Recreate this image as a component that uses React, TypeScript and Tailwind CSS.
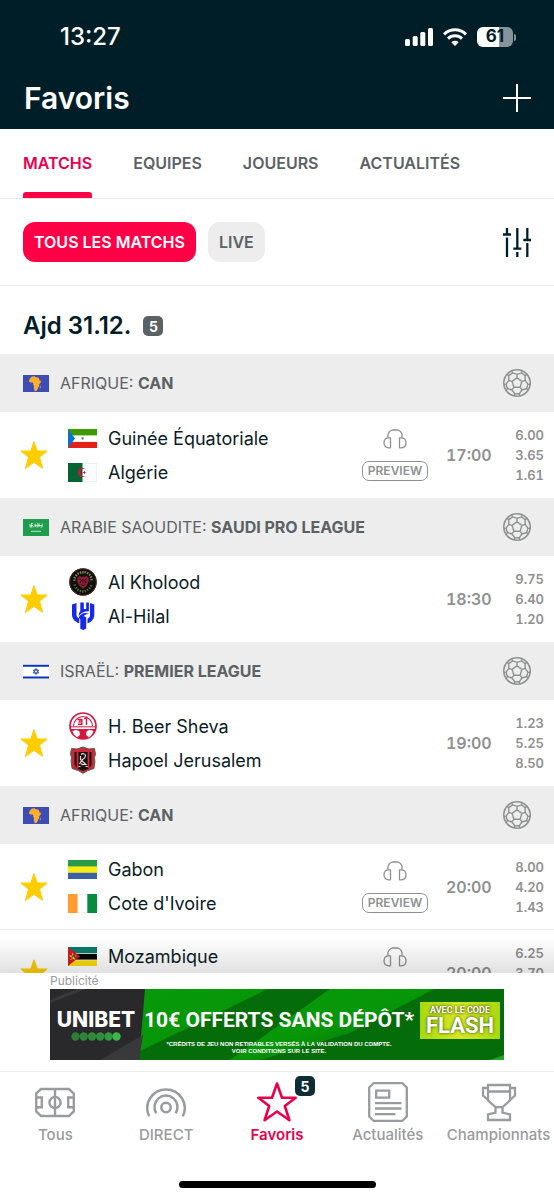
import React from "react";

type Team = { name: string; logo: React.ReactNode };
type Match = { home: Team; away: Team; time: string; odds: string[]; preview?: boolean };
type League = { country: string; name: string; flag: React.ReactNode; matches: Match[] };

/* ---------- Country flags ---------- */

const flagTeam = "w-[29px] h-[19px] shrink-0";
const flagLeague = "w-[26px] h-[17px] shrink-0";

const AfricaFlag = () => (
  <svg className={flagLeague} viewBox="0 0 26 17" aria-hidden="true">
    <rect width="26" height="17" fill="#3e4db5" />
    <path
      d="M7 3.400 8.600 1.700l3.200-.5.500.7 2.300.6 1 .2 1.200 3.100 1.500.1-.9 2-1.300 1.600.1 1.900-1.100.9-.2 1.400-1.900 2.600h-1.200l-.9-2.800.2-2.100-.9-1.900.1-1.500-.8-.5-1.900.1L6.100 6.700l.1-1.600Z"
      fill="#fbb02d"
    />
    <path d="m17 11.200.9-.7-.4 2.400-.8.500Z" fill="#fbb02d" />
  </svg>
);

const SaudiFlag = () => (
  <svg className={flagLeague} viewBox="0 0 26 17" aria-hidden="true">
    <rect width="26" height="17" fill="#1f9d4d" />
    <path
      d="M7 8V5m1.500 3V4.800M10 8c1 0 1.500-1 1.200-2.500M12.500 8V4.500M13.500 8h1.500V5M16.200 8V4.500M17.500 8h1.700V4.500M7 8h2.500M8 4.500h2M14 4.500h1.500M7 6.500h3M12 6.500h7"
      stroke="#fff"
      strokeWidth=".8"
      fill="none"
      opacity=".85"
    />
    <path d="M8 12.300h10" stroke="#fff" strokeWidth=".9" opacity=".8" />
  </svg>
);

const IsraelFlag = () => (
  <svg className={flagLeague} viewBox="0 0 26 17" aria-hidden="true">
    <rect y="1" width="26" height="15" fill="#fff" />
    <path d="M0 2.700h26M0 14.400h26" stroke="#0b33b5" strokeWidth="2" />
    <path d="m13 5.500 2.600 4.500h-5.200ZM13 11.500l2.600-4.500h-5.200Z" fill="none" stroke="#0b33b5" strokeWidth=".8" />
  </svg>
);

const GuineaFlag = () => (
  <svg className={flagTeam} viewBox="0 0 29 19" aria-hidden="true">
    <rect width="29" height="19" fill="#fff" />
    <path d="M0 0h29v6.400H0Z" fill="#3e9a00" />
    <path d="M0 12.900h29V19H0Z" fill="#e32118" />
    <path d="M0 0 7 9.500 0 19Z" fill="#0b73ce" />
    <path d="M13 8h3v2l-1.500 1.300L13 10Z" fill="#b9c0bb" />
    <path d="M14 8.500h1.200v1.800H14Z" fill="#5d8a62" />
  </svg>
);

const AlgeriaFlag = () => (
  <svg className={flagTeam} viewBox="0 0 29 19" aria-hidden="true">
    <rect x=".25" y=".25" width="28.500" height="18.500" fill="#fff" stroke="#e2e2e2" strokeWidth=".5" />
    <path d="M0 0h14.500v19H0Z" fill="#056334" />
    <path d="M17.600 6.200a4.600 4.600 0 1 0 0 6.600 3.700 3.700 0 1 1 0-6.600Z" fill="#d3123a" />
    <path d="m14 9.500 1.700-.5 1.200-1.400v1.500l1.600.4-1.600.5v1.500l-1.200-1.400Z" fill="#d3123a" />
  </svg>
);

const GabonFlag = () => (
  <svg className={flagTeam} viewBox="0 0 29 19" aria-hidden="true">
    <rect width="29" height="19" fill="#f6ec11" />
    <path d="M0 0h29v6.400H0Z" fill="#299b48" />
    <path d="M0 12.800h29V19H0Z" fill="#3c5fa8" />
  </svg>
);

const IvoryFlag = () => (
  <svg className={flagTeam} viewBox="0 0 29 19" aria-hidden="true">
    <rect x=".25" y=".25" width="28.500" height="18.500" fill="#fff" stroke="#e2e2e2" strokeWidth=".5" />
    <path d="M0 0h9.600v19H0Z" fill="#ff9d32" />
    <path d="M19.300 0H29v19h-9.700Z" fill="#078b3f" />
  </svg>
);

const MozambiqueFlag = () => (
  <svg className={flagTeam} viewBox="0 0 29 19" aria-hidden="true">
    <rect width="29" height="19" fill="#fff" />
    <path d="M0 0h29v6H0Z" fill="#087b6c" />
    <path d="M0 6.800h29v5.800H0Z" fill="#060606" />
    <path d="M0 13.300h29V19H0Z" fill="#fbdc09" />
    <path d="M0 0 12 9.500 0 19Z" fill="#d7182a" />
    <path d="m4.700 5.500 1 3h3L6.300 10.300l1 3-2.600-1.900-2.500 1.900 1-3L.8 8.500h3Z" fill="#f5d416" />
    <path d="M2.500 12 7 7.500M3.500 9h3v1.500" stroke="#221a11" strokeWidth=".8" fill="none" />
  </svg>
);

/* ---------- Club crests ---------- */

const crest = "size-7 shrink-0";

const KholoodCrest = () => (
  <svg className={crest} viewBox="0 0 28 28" aria-hidden="true">
    <circle cx="14" cy="14" r="13.800" fill="#0d110c" />
    <circle cx="14" cy="14" r="13.300" fill="none" stroke="#7d2429" strokeWidth=".7" />
    <path
      d="m4.300 12.200 2.200-.1M4.600 9l2.200 1.300M6.300 6.600l1.900 1.600M8.500 4.500l1.300 2.200m1.300-3.300.8 2.300m1.900-2.800v2.500m2.600-2.300-.5 2.300m3.400-1.200-1.200 2m3.500-.2-1.700 1.600m3.200.8-2 1.200m2.600 1.900-2.300.2"
      stroke="#a39a63"
      strokeWidth="1.400"
      fill="none"
      opacity=".85"
    />
    <path
      d="m4.700 17.500 2.100-.9m-.4 4.200 1.700-1.600m.3 3.700 1.300-2m1.300 3.300.7-2.300m2.100 2.800v-2.400m2.800 2-.6-2.300m3.200 1-1.200-2m3.500-.2-1.800-1.400m3.400-1.200-2.100-.9"
      stroke="#6d8a58"
      strokeWidth="1.300"
      fill="none"
      opacity=".8"
    />
    <path d="M8.500 9.500 11 7.700l1.500 1.500L14 8.200l1.500 1L17 7.700l2.500 1.800.3 4-1.800 3.800-4 3.700-4-3.700-1.800-3.800Z" fill="#8c1c38" />
    <path d="m10.500 11 2 1.500-1.500 2.500m6.500-4-2 1.500 1.500 2.500M14 11v3.500m-1.500 2 1.500 1.500 1.500-1.500" stroke="#1a0a0c" strokeWidth=".9" fill="none" />
  </svg>
);

const HilalCrest = () => (
  <svg className={crest} viewBox="0 0 28 28" aria-hidden="true">
    <path d="M3 2.500 7.500 1v12c0 1.500 1 2.600 2.700 3.200v5.100C5.800 19.700 3 16.800 3 12.500Z" fill="#1729e8" />
    <path d="m21 1 4.300 1.500v10c0 4.300-2.400 7.400-6.800 8.900v-4.700c1.700-.7 2.500-1.800 2.500-3.400Z" fill="#1729e8" />
    <path d="M11.300.500h3.500V7h2.400V.5h2.700v8.800c-5 .1-7.900 1.500-10.200 4.700 0-2 .4-3.600 1.600-4.800Z" fill="#1729e8" />
    <path d="M9.700 15.500c2-4.300 6.300-5.600 10.500-3.500-3-.3-4.700.6-5.400 2.700 1.200-.3 2 .1 2.400 1v10.800L14.500 28l-3.200-1V17.500Z" fill="#1729e8" />
  </svg>
);

const ShevaCrest = () => (
  <svg className={crest} viewBox="0 0 28 28" aria-hidden="true">
    <circle cx="14" cy="14" r="13" fill="#fff" stroke="#d41940" strokeWidth="1.700" />
    <path d="M4.500 14a9.500 9.500 0 0 1 19 0" fill="none" stroke="#d41940" strokeWidth="1.100" />
    <path d="M1 14.300h26v1H1Z" fill="#d41940" />
    <path d="M1.500 17h25A13 13 0 0 1 14 27 13 13 0 0 1 1.500 17Z" fill="#d41940" />
    <path d="m3.500 19 4-1.300 3 1.800.4 3.500-2.700 2.300C6 24 4.300 22 3.500 19ZM24.500 19l-4-1.300-3 1.800-.4 3.500 2.700 2.300c2.200-1.300 3.900-3.300 4.700-6.300Z" fill="#fff" />
    <path d="M8.500 7.500h4.300v4.800H9m2-4.800v2.600H9.500m8 2.900V5.500L15.300 7" fill="none" stroke="#d41940" strokeWidth="1.400" />
  </svg>
);

const JerusalemCrest = () => (
  <svg className={crest} viewBox="0 0 28 28" aria-hidden="true">
    <path d="M2.500 2.500 8 3l6-2 6 2 5.500-.5 1 6-1.200 3 .6 4-1 7-6.400 2.200L14 27.300l-4.500-2.600-6.400-2.200-1-7 .6-4L1.500 8.500Z" fill="#c72a38" stroke="#5b5554" strokeWidth="1" />
    <path d="M5.500 6h17v13c-1.500 3.200-4.600 4.700-8.500 6-3.900-1.300-7-2.800-8.500-6Z" fill="#171213" />
    <path d="M8.500 6v16M19.500 6v16" stroke="#d42c39" strokeWidth="1.800" />
    <path d="M12 8.500c1.500-1.500 4.500-1 4.500 1.300S14.500 13 13 14l-2.500 4M11.500 10v3.500l6 5.500M9.500 20.500h2m5 0h2M12 17.500c1.500 1.500 3 1.500 4.500 0" fill="none" stroke="#ecd5d2" strokeWidth="1.200" />
  </svg>
);

/* ---------- Interface icons ---------- */

const polar = (r: number, deg: number) => {
  const a = (deg * Math.PI) / 180;
  return `${(14 + r * Math.cos(a)).toFixed(2)} ${(14 + r * Math.sin(a)).toFixed(2)}`;
};

const seams = [0, 1, 2, 3, 4]
  .map((k) => {
    const a = -90 + 72 * k;
    return (
      `M${polar(5.2, a)}L${polar(5.2, a + 72)}M${polar(5.2, a)}L${polar(8.6, a)}` +
      `M${polar(13.2, a - 24)}L${polar(11, a - 24)}L${polar(8.6, a)}L${polar(11, a + 24)}L${polar(13.2, a + 24)}` +
      `M${polar(11, a + 24)}L${polar(11, a + 48)}`
    );
  })
  .join("");

const Ball = () => (
  <svg className="size-7 shrink-0" viewBox="0 0 28 28" fill="none" stroke="#8f9090" aria-hidden="true">
    <circle cx="14" cy="14" r="13.200" strokeWidth="1.600" />
    <path d={seams} strokeWidth="1.400" strokeLinejoin="round" />
  </svg>
);

const Star = () => (
  <svg className="size-7" viewBox="0 0 28 28" aria-hidden="true">
    <path
      d="M14 .8 17.300 10H27.200L19.500 16.300 22.600 27.400 14 21.400 5.400 27.400 8.500 16.300.8 10h9.900Z"
      fill="#ffcd00"
      stroke="#ffcd00"
      strokeWidth="1"
      strokeLinejoin="round"
    />
  </svg>
);

const Headphones = () => (
  <svg className="h-5 w-6" viewBox="0 0 24 20" fill="none" stroke="#8f9090" strokeWidth="1.300" strokeLinejoin="round" aria-hidden="true">
    <path d="M5 8.700V5.200L6.500 2.500 9.200 1h5.600l2.700 1.500L19 5.200v3.500" />
    <path d="M7.500 8.800v10H5.800C2.500 18.800 1 16.600 1 13.800s1.500-5 4.800-5ZM16.500 8.800v10h1.700c3.300 0 4.800-2.200 4.800-5s-1.500-5-4.800-5Z" />
  </svg>
);

const Sliders = () => (
  <svg className="h-[29px] w-7" viewBox="0 0 28 29" stroke="#001e28" strokeWidth="2.300" aria-hidden="true">
    <path d="M4 0v7M4 9.500V29M0 6.500h8M14.300 0v21M14.300 24v5M10.300 20.700h8M24.300 0v12M24.300 15v14M20.300 12h7.700" />
  </svg>
);

const Plus = () => (
  <svg className="size-7" viewBox="0 0 28 28" stroke="#fff" strokeWidth="2" aria-hidden="true">
    <path d="M14 0v28M0 14h28" />
  </svg>
);

const Signal = () => (
  <svg className="h-[18px] w-7" viewBox="0 0 28 18" fill="#fff" aria-hidden="true">
    <rect y="11" width="5" height="7" rx="1.500" />
    <rect x="7.700" y="8" width="5" height="10" rx="1.500" />
    <rect x="15.300" y="4" width="5" height="14" rx="1.500" />
    <rect x="23" width="5" height="18" rx="1.500" />
  </svg>
);

const Wifi = () => (
  <svg className="h-[18px] w-6" viewBox="0 0 24 18" fill="none" stroke="#fff" strokeWidth="3" aria-hidden="true">
    <path d="M1 6.300a15.800 15.800 0 0 1 22 0" />
    <path d="M5 10.600a10.200 10.200 0 0 1 14 0" />
    <path d="M8.300 14.200a5.400 5.400 0 0 1 7.400 0L12 18Z" fill="#fff" stroke="none" />
  </svg>
);

const Pitch = () => (
  <svg className="size-10" viewBox="0 0 40 40" fill="none" stroke="#999b9c" strokeWidth="2.400" aria-hidden="true">
    <path d="M6 7h28l4.800 4.500v18L34 34H6l-4.800-4.500v-18ZM20 7v27M1.200 15.500h5.600v9.700H1.200M38.800 15.500h-5.600v9.700h5.600" />
    <circle cx="20" cy="20.500" r="5.600" />
  </svg>
);

const Live = () => (
  <svg className="size-10" viewBox="0 0 40 40" fill="none" stroke="#999b9c" strokeWidth="2.500" aria-hidden="true">
    <circle cx="20" cy="25.500" r="4.700" />
    <path d="M10.300 31.300a11.500 11.500 0 1 1 19.400 0" />
    <path d="M3.200 34.300a18.700 18.700 0 1 1 33.600 0" />
  </svg>
);

const StarOutline = () => (
  <svg className="size-10" viewBox="0 0 40 40" fill="none" stroke="#e8004c" strokeWidth="2.600" strokeLinejoin="round" aria-hidden="true">
    <path d="m20 1.500 5 14.300h13.700L27.800 24l4.600 14.200L20 29.500 7.600 38.200 12.200 24 1.300 15.800H15Z" />
  </svg>
);

const News = () => (
  <svg className="size-10" viewBox="0 0 40 40" fill="none" stroke="#999b9c" strokeWidth="2.300" aria-hidden="true">
    <path d="M5.500 1.200h29l4.300 4.300v29l-4.300 4.300h-29L1.200 34.500v-29Z" strokeLinejoin="round" />
    <path d="M8.200 8.700h13v7h-13ZM7 21.200h26.500M7 26.500h26.500M7 32.200h20.500" />
  </svg>
);

const Trophy = () => (
  <svg className="size-10" viewBox="0 0 40 40" fill="none" stroke="#999b9c" strokeWidth="2.300" aria-hidden="true">
    <path d="M9 3h22v15.500l-7.500 6.700h-7L9 18.500ZM9 9.500h22M9 6H4v7.500l6 5.500M31 6h5v7.500L30 19M16.500 25v5.500L9 32.500V38h22v-5.500l-7.500-2V25" />
  </svg>
);

/* ---------- Content ---------- */

const leagues: League[] = [
  {
    country: "AFRIQUE",
    name: "CAN",
    flag: <AfricaFlag />,
    matches: [
      {
        home: { name: "Guinée Équatoriale", logo: <GuineaFlag /> },
        away: { name: "Algérie", logo: <AlgeriaFlag /> },
        time: "17:00",
        odds: ["6.00", "3.65", "1.61"],
        preview: true,
      },
    ],
  },
  {
    country: "ARABIE SAOUDITE",
    name: "SAUDI PRO LEAGUE",
    flag: <SaudiFlag />,
    matches: [
      {
        home: { name: "Al Kholood", logo: <KholoodCrest /> },
        away: { name: "Al-Hilal", logo: <HilalCrest /> },
        time: "18:30",
        odds: ["9.75", "6.40", "1.20"],
      },
    ],
  },
  {
    country: "ISRAËL",
    name: "PREMIER LEAGUE",
    flag: <IsraelFlag />,
    matches: [
      {
        home: { name: "H. Beer Sheva", logo: <ShevaCrest /> },
        away: { name: "Hapoel Jerusalem", logo: <JerusalemCrest /> },
        time: "19:00",
        odds: ["1.23", "5.25", "8.50"],
      },
    ],
  },
  {
    country: "AFRIQUE",
    name: "CAN",
    flag: <AfricaFlag />,
    matches: [
      {
        home: { name: "Gabon", logo: <GabonFlag /> },
        away: { name: "Cote d'Ivoire", logo: <IvoryFlag /> },
        time: "20:00",
        odds: ["8.00", "4.20", "1.43"],
        preview: true,
      },
      {
        home: { name: "Mozambique", logo: <MozambiqueFlag /> },
        away: { name: "Cameroun", logo: <GabonFlag /> },
        time: "20:00",
        odds: ["6.25", "3.70", "1.57"],
        preview: true,
      },
    ],
  },
];

const TeamLine = ({ team }: { team: Team }) => (
  <div className="flex h-[34px] items-center">
    <span className="flex w-[29px] justify-center">{team.logo}</span>
    <span className="ml-[11px] truncate text-[18px] text-[#0b1c26]">{team.name}</span>
  </div>
);

const MatchRow = ({ match }: { match: Match }) => (
  <li className="flex h-[86px] items-center border-b border-[#ededed] pr-[10px] pl-5 last:border-b-0">
    <button type="button" aria-label="Retirer des favoris">
      <Star />
    </button>
    <div className="ml-5 min-w-0 flex-1">
      <TeamLine team={match.home} />
      <TeamLine team={match.away} />
    </div>
    {match.preview && (
      <div className="flex w-[66px] shrink-0 flex-col items-center gap-3">
        <Headphones />
        <button
          type="button"
          className="flex h-5 w-full items-center justify-center rounded-[7px] border border-[#8f9090] text-[12px] font-semibold text-[#8f9090]"
        >
          PREVIEW
        </button>
      </div>
    )}
    <time className="ml-[18px] w-11 shrink-0 text-[16px] font-semibold text-[#8f9090] tabular-nums">{match.time}</time>
    <div className="w-[54px] shrink-0 text-right text-[13px] leading-5 font-semibold text-[#8f9090] tabular-nums">
      {match.odds.map((odd) => (
        <div key={odd}>{odd}</div>
      ))}
    </div>
  </li>
);

const LeagueSection = ({ league }: { league: League }) => (
  <section>
    <h3 className="flex h-[58px] items-center bg-[#ededed] pr-[23px] pl-[23px] text-[16px] text-[#5b6265]">
      {league.flag}
      <span className="ml-[11px] flex-1">
        {league.country}: <strong className="font-bold">{league.name}</strong>
      </span>
      <Ball />
    </h3>
    <ul>
      {league.matches.map((match) => (
        <MatchRow key={match.home.name} match={match} />
      ))}
    </ul>
  </section>
);

const tabs = ["MATCHS", "EQUIPES", "JOUEURS", "ACTUALITÉS"];

const navItems = [
  { label: "Tous", icon: <Pitch /> },
  { label: "DIRECT", icon: <Live /> },
  { label: "Favoris", icon: <StarOutline />, badge: "5" },
  { label: "Actualités", icon: <News /> },
  { label: "Championnats", icon: <Trophy /> },
];

const AdBanner = () => (
  <aside className="bg-white px-[50px] pb-[11px]">
    <div className="h-4 text-[12px] leading-4 text-[#999b9c]">Publicité</div>
    <a
      href="#unibet"
      className="relative flex h-[71px] items-center overflow-hidden bg-[#047d0a] font-['Roboto',sans-serif] font-bold text-white"
    >
      <svg className="absolute inset-0 h-full w-full" viewBox="0 0 454 71" preserveAspectRatio="none" aria-hidden="true">
        <defs>
          <linearGradient id="greenGlow" x1="0" x2="1" y1="0" y2="1">
            <stop offset="0" stopColor="#079a0b" />
            <stop offset=".5" stopColor="#079608" />
            <stop offset="1" stopColor="#035a08" />
          </linearGradient>
        </defs>
        <path d="M0 0h454v71H0Z" fill="#056c0a" />
        <path d="M88 0h130L88 63Z" fill="url(#greenGlow)" />
        <path d="M280 0h104L300 44 210 71h-30Z" fill="url(#greenGlow)" />
        <path d="M454 66v5h-14Z" fill="#20a52a" />
        <path d="M0 0h95l-6 71H0Z" fill="#29292b" />
        <path d="m0 14 36-14h-9L0 11ZM93 46 50 71h39Z" fill="#39393b" />
      </svg>
      <div className="relative w-[92px] shrink-0 text-center">
        <div className="font-['Inter',sans-serif] text-[21px] leading-6 font-extrabold">UNIBET</div>
        <svg className="mx-auto h-[9px] w-[50px]" viewBox="0 0 50 9" fill="#2f9b3c" aria-hidden="true">
          <circle cx="4.500" cy="4.500" r="4.200" opacity=".75" />
          <circle cx="12.700" cy="4.500" r="4.200" opacity=".8" />
          <circle cx="21" cy="4.500" r="4.200" opacity=".85" />
          <circle cx="29.200" cy="4.500" r="4.200" opacity=".9" />
          <circle cx="37.500" cy="4.500" r="4.200" />
          <circle cx="45.500" cy="4.500" r="4.200" fill="#3db54a" />
        </svg>
      </div>
      <div className="relative flex min-w-0 flex-1 flex-col items-center pt-1 whitespace-nowrap">
        <div className="text-[21px] leading-[42px]">10€ OFFERTS SANS DÉPÔT*</div>
        <div className="text-center font-['Liberation_Sans',sans-serif] text-[6px] leading-[7px]">
          *CRÉDITS DE JEU NON RETIRABLES VERSÉS À LA VALIDATION DU COMPTE.
          <br />
          VOIR CONDITIONS SUR LE SITE.
        </div>
      </div>
      <div className="relative mb-2 mr-1 ml-1 flex h-[37px] w-20 shrink-0 flex-col items-center justify-center bg-linear-to-r from-[#a8d80e] via-[#d9e822] to-[#a8d80e]">
        <div className="text-[9px] leading-[10px] whitespace-nowrap text-shadow-[0_0_3px_#000]">AVEC LE CODE</div>
        <div className="text-[22px] leading-[22px] text-shadow-[0_0_3px_#123d0c]">FLASH</div>
      </div>
    </a>
  </aside>
);

export default function App() {
  return (
    <div className="flex h-screen flex-col overflow-hidden bg-white font-['Inter',sans-serif] text-[#001e28]">
      <header className="shrink-0 bg-[#001e28] text-white">
        <div className="flex h-[70px] items-center pt-1 pr-[38px] pl-[60px]">
          <span className="flex-1 text-[24px] font-medium">13:27</span>
          <div className="flex items-center gap-[10px]">
            <Signal />
            <Wifi />
            <div className="flex items-center gap-px">
              <span className="flex h-5 w-9 items-center justify-center rounded-md bg-linear-to-r from-white from-62% to-[#84949a] to-62% text-[17px] font-bold text-[#001e28]">
                61
              </span>
              <span className="h-[7px] w-0.5 rounded-r-sm bg-[#84949a]" />
            </div>
          </div>
        </div>
        <div className="flex h-[59px] items-center justify-between pr-[23px] pb-[3px] pl-6">
          <h1 className="text-[30px] font-semibold">Favoris</h1>
          <button type="button" aria-label="Ajouter">
            <Plus />
          </button>
        </div>
      </header>

      <nav className="flex h-[70px] shrink-0 gap-[41px] border-b border-[#e9e9e9] px-[23px] text-[16px] font-semibold text-[#5b6265]">
        {tabs.map((tab, i) => (
          <a
            key={tab}
            href={`#${tab.toLowerCase()}`}
            className={
              i === 0
                ? "flex flex-col justify-between pt-[22px] text-[#e8004c] after:h-[6px] after:rounded-t-[3px] after:bg-[#ff0046]"
                : "pt-[22px]"
            }
          >
            {tab}
          </a>
        ))}
      </nav>

      <div className="flex h-[87px] shrink-0 items-center gap-3 border-b border-[#e9e9e9] px-[23px] text-[16px] font-semibold">
        <button type="button" className="h-10 rounded-xl bg-[#ff0046] px-[11px] text-white">
          TOUS LES MATCHS
        </button>
        <button type="button" className="h-10 rounded-xl bg-[#ededed] px-[11px] text-[#5b6265]">
          LIVE
        </button>
        <button type="button" aria-label="Filtrer" className="ml-auto">
          <Sliders />
        </button>
      </div>

      <main className="relative min-h-0 flex-1 overflow-hidden">
        <h2 className="flex h-[68px] items-center gap-3 px-[23px] pt-3 text-[24px] font-semibold">
          Ajd 31.12.
          <span className="flex size-5 items-center justify-center rounded-[5px] bg-[#5b6265] text-[14px] font-bold text-white">
            5
          </span>
        </h2>
        {leagues.map((league, i) => (
          <LeagueSection key={i} league={league} />
        ))}
        <div className="pointer-events-none absolute inset-x-0 bottom-0 h-9 bg-linear-to-t from-black/12 to-transparent" />
      </main>

      <AdBanner />

      <nav className="shrink-0 border-t border-[#e9e9e9] bg-white">
        <div className="grid h-[80px] grid-cols-5 pt-[10px]">
          {navItems.map((item) => (
            <a
              key={item.label}
              href={`#${item.label.toLowerCase()}`}
              className={
                item.badge
                  ? "flex flex-col items-center gap-0.5 text-[15px] font-semibold text-[#e8004c]"
                  : "flex flex-col items-center gap-0.5 text-[15px] font-medium text-[#999b9c]"
              }
            >
              <span className="relative">
                {item.icon}
                {item.badge && (
                  <span className="absolute -top-[6px] -right-[18px] flex size-5 items-center justify-center rounded-[5px] bg-[#0f2d37] text-[14px] font-bold text-white">
                    {item.badge}
                  </span>
                )}
              </span>
              {item.label}
            </a>
          ))}
        </div>
        <div className="flex h-12 items-end justify-center pb-3">
          <span className="h-[7px] w-[197px] rounded-full bg-black" />
        </div>
      </nav>
    </div>
  );
}
